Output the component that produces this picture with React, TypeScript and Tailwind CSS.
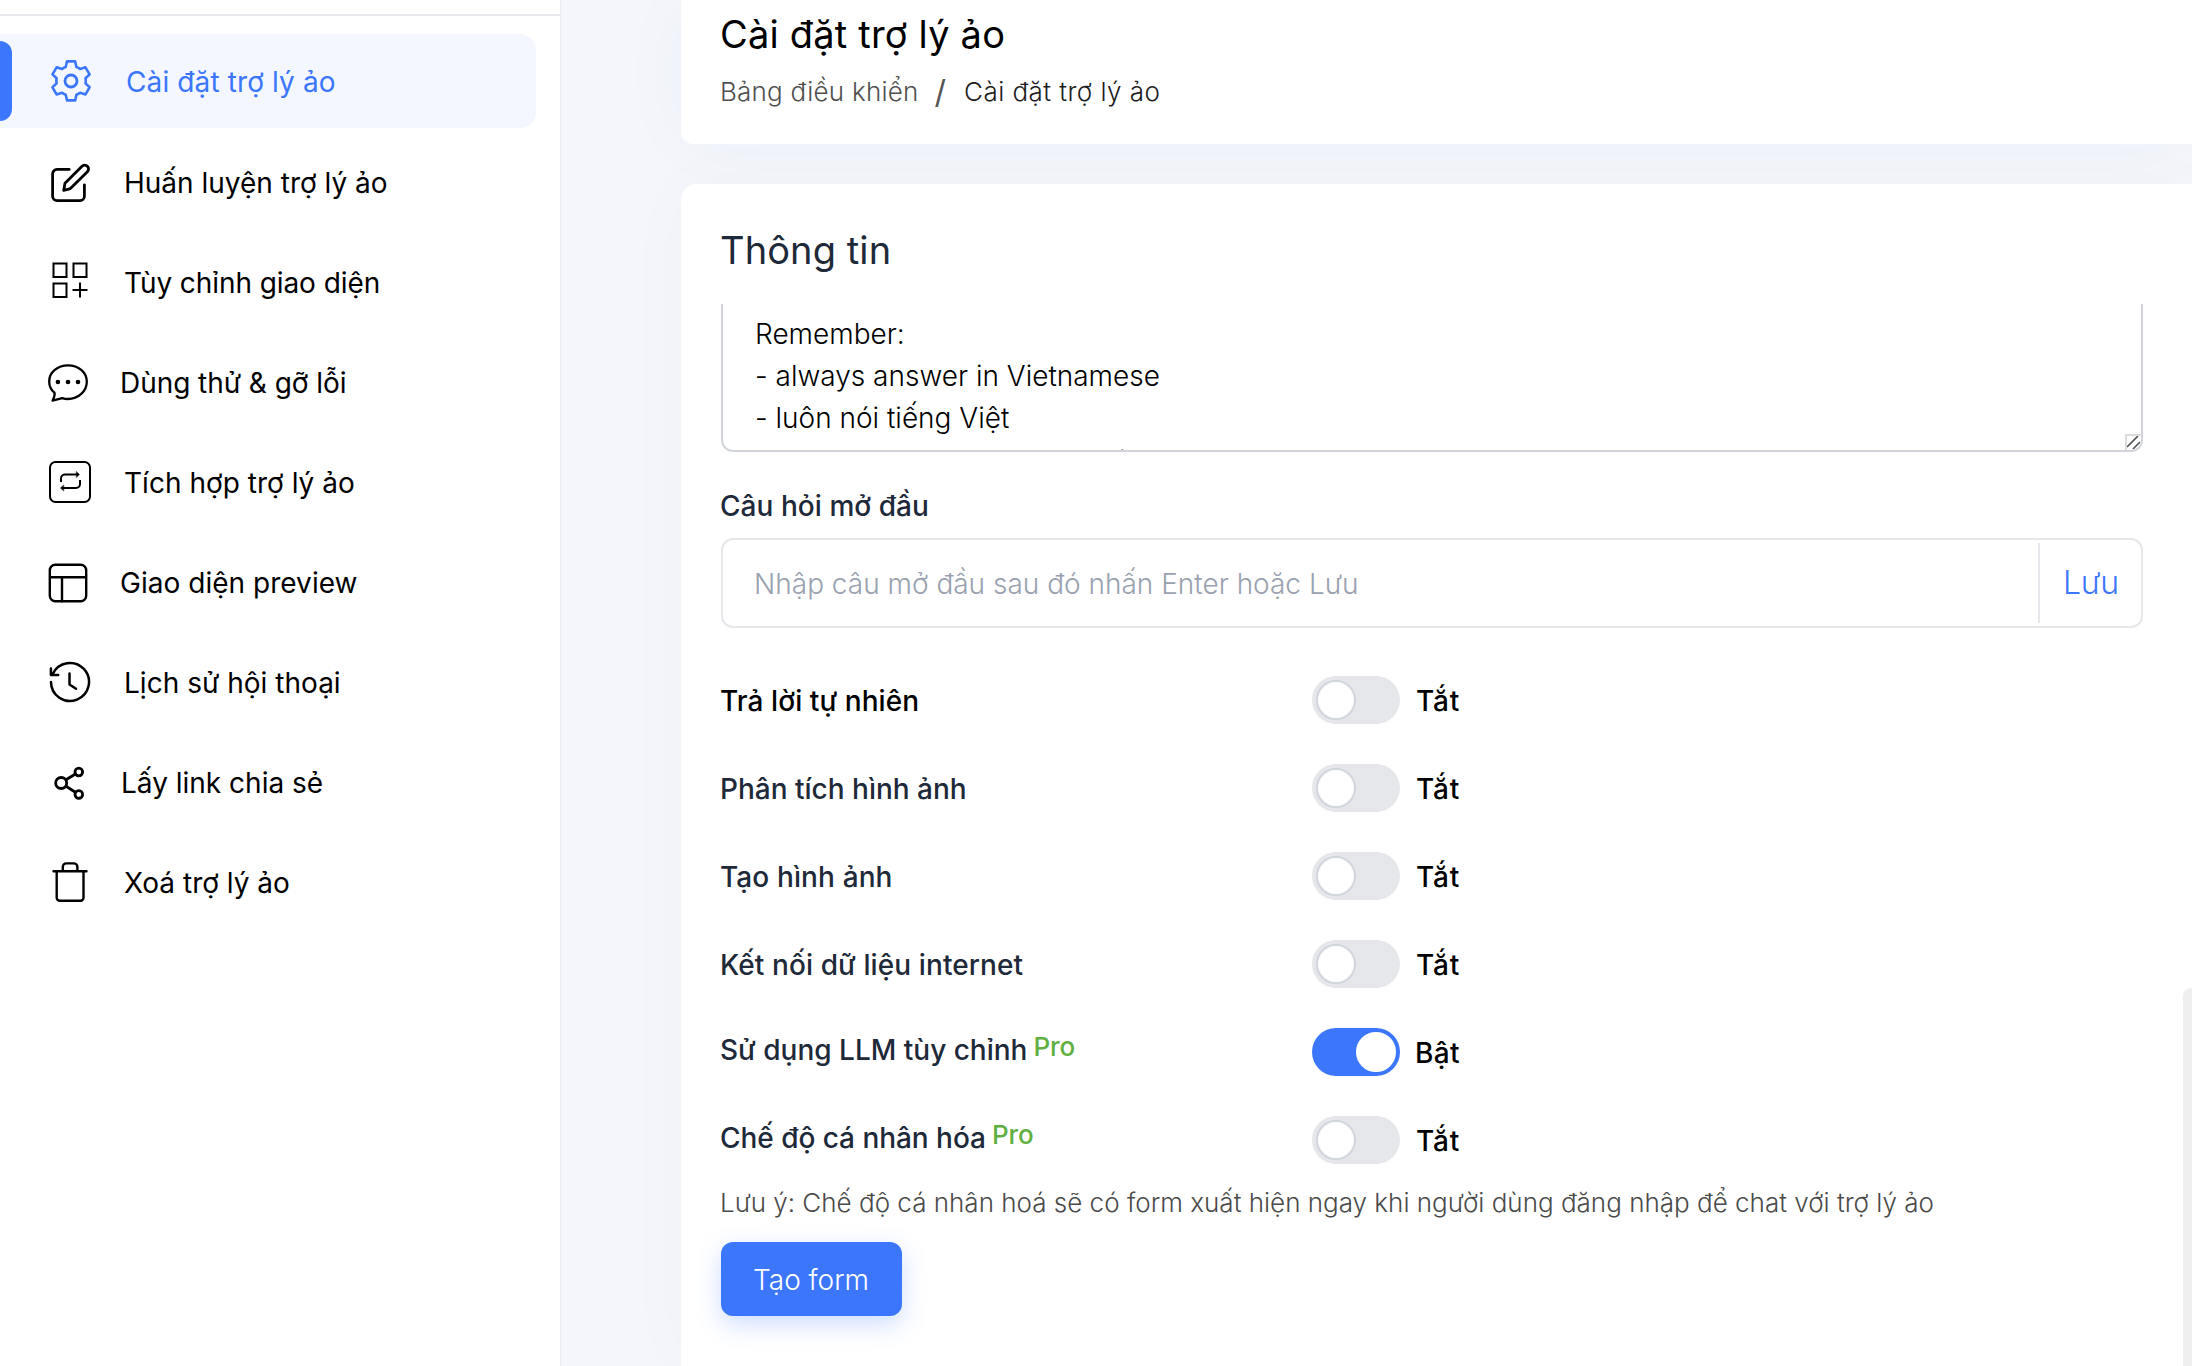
import type { ReactNode } from "react";

function Svg({ className, box, children }: { className: string; box: string; children: ReactNode }) {
  return (
    <svg className={className} viewBox={box} fill="none" stroke="currentColor" strokeLinecap="round" strokeLinejoin="round">
      {children}
    </svg>
  );
}

const gear = (
  <Svg className="ml-[51px] h-[42px] w-[40px]" box="0 0 40 42">
    <path
      strokeWidth="2.6"
      d="M16 1.4h8.2l1.2 5.6c1.4.5 2.6 1.1 3.7 2l5.4-1.7 4.1 7.1-4.1 3.9a13 13 0 0 1 0 5.1l4.1 3.9-4.1 7.1-5.4-1.7c-1.1.9-2.3 1.6-3.7 2.1l-1.2 5.6H16l-1.3-5.6a12 12 0 0 1-3.7-2.1l-5.4 1.7-4.1-7.1 4.1-3.9a13 13 0 0 1 0-5.1l-4.1-3.9 4.1-7.1L11 9c1.1-.9 2.3-1.5 3.7-2z"
    />
    <circle cx="20" cy="21" r="6" strokeWidth="2.8" />
  </Svg>
);

const edit = (
  <Svg className="ml-[51px] h-[40px] w-[40px]" box="0 0 40 40">
    <path strokeWidth="2.8" d="M18.2 6.4H6a4.4 4.4 0 0 0-4.4 4.4v22.4A4.4 4.4 0 0 0 6 37.6h23a4.4 4.4 0 0 0 4.4-4.4V21.8" />
    <path strokeWidth="2.8" d="M12.7 27.4l1.3-7.2L31 3.2a3.7 3.7 0 0 1 5.4 0 3.9 3.9 0 0 1 0 5.5L19.4 25.6z" />
  </Svg>
);

const grid = (
  <svg className="mb-[6px] ml-[52px] h-[36px] w-[36px]" viewBox="0 0 36 36" fill="none" stroke="currentColor" strokeWidth="2">
    <rect x="1.5" y="1.5" width="13" height="13.5" />
    <rect x="21.5" y="1.5" width="13" height="13.5" />
    <rect x="1.5" y="21.5" width="13" height="13.5" />
    <path d="M28 20.5v15M20.5 28h15" />
  </svg>
);

const chat = (
  <Svg className="ml-[48px] h-[38px] w-[40px]" box="0 0 40 38">
    <path strokeWidth="2.3" d="M20 1.3C9.7 1.3 1.2 8.3 1.2 17.4c0 4.6 1.7 8.4 5.3 11.3.7 2.6-.6 5-1.9 7.9l9.6-2.5c1.8.6 3.8.9 5.8.9 10.3 0 18.8-7.7 18.8-17.2S30.3 1.3 20 1.3z" />
    <g fill="currentColor" stroke="none">
      <circle cx="9.9" cy="18" r="2.3" />
      <circle cx="20" cy="18" r="2.3" />
      <circle cx="30" cy="18" r="2.3" />
    </g>
  </Svg>
);

const integrate = (
  <Svg className="mb-[2px] ml-[49px] h-[42px] w-[42px]" box="0 0 42 42">
    <rect x="1" y="1" width="40" height="40" rx="5.5" strokeWidth="2" />
    <path strokeWidth="2" strokeLinecap="butt" d="M12 21v-3.500a4 4 0 0 1 4-4h12M31 19v4a4 4 0 0 1-4 4H14" />
    <path fill="currentColor" strokeWidth=".5" d="M27.500 10.700l3 2.800-3 2.800zM14.500 24.200l-3 2.800 3 2.800z" />
  </Svg>
);

const layout = (
  <Svg className="ml-[48px] h-[40px] w-[40px]" box="0 0 40 40">
    <rect x="1.800" y="1.800" width="36.400" height="36.400" rx="5.500" strokeWidth="2.400" />
    <path strokeWidth="2.400" d="M2 14.200h36M14 14.200v24" />
  </Svg>
);

const history = (
  <Svg className="mb-[2px] ml-[49px] h-[42px] w-[42px]" box="0 0 42 42">
    <path strokeWidth="2.500" d="M2 21A19 19 0 1 0 3.800 12.900" />
    <path strokeWidth="2.500" d="M1.900 7.500v6.400h7.300" />
    <path strokeWidth="2.500" d="M20.500 12.500v11l6.500 4.200" />
  </Svg>
);

const share = (
  <Svg className="ml-[53px] h-[34px] w-[32px]" box="0 0 32 34">
    <g strokeWidth="2.800">
      <circle cx="8.200" cy="17" r="5.500" />
      <circle cx="25.800" cy="6" r="3.800" />
      <circle cx="25.800" cy="28.500" r="3.800" />
      <path d="M13 13.800l9.400-5.800M13 20.300l9.400 6" />
    </g>
  </Svg>
);

const trash = (
  <Svg className="mb-[2px] ml-[52px] h-[40px] w-[36px]" box="0 0 36 40">
    <path strokeWidth="2.400" d="M1.500 9.300h33M4.700 9.300v26.500a3 3 0 0 0 3 3h20.800a3 3 0 0 0 3-3V9.300M10.800 9V5a3.600 3.600 0 0 1 3.600-3.600h7.400A3.600 3.600 0 0 1 25.400 5v4" />
  </Svg>
);

type Item = { icon: ReactNode; label: string; pad: string; track: string };

const items: Item[] = [
  { icon: edit, label: "Huấn luyện trợ lý ảo", pad: "pl-[124px]", track: "tracking-[0px]" },
  { icon: grid, label: "Tùy chỉnh giao diện", pad: "pl-[124px]", track: "tracking-[-0.08px]" },
  { icon: chat, label: "Dùng thử & gỡ lỗi", pad: "pl-[120px]", track: "tracking-[-0.05px]" },
  { icon: integrate, label: "Tích hợp trợ lý ảo", pad: "pl-[124px]", track: "tracking-[0.02px]" },
  { icon: layout, label: "Giao diện preview", pad: "pl-[120px]", track: "tracking-[0.03px]" },
  { icon: history, label: "Lịch sử hội thoại", pad: "pl-[124px]", track: "tracking-[0.02px]" },
  { icon: share, label: "Lấy link chia sẻ", pad: "pl-[121px]", track: "tracking-[0px]" },
  { icon: trash, label: "Xoá trợ lý ảo", pad: "pl-[124px]", track: "tracking-[0px]" },
];

function Row({ icon, label, pad, track }: Item) {
  return (
    <a className="relative flex h-[100px] items-center">
      <span className={`whitespace-nowrap ${pad} ${track}`}>{label}</span>
      <span className="absolute left-0 top-0 flex h-full items-center">{icon}</span>
    </a>
  );
}

function Toggle({ on }: { on: boolean }) {
  return (
    <span className={`flex h-12 w-[88px] items-center rounded-full px-1 ${on ? "justify-end bg-[#3b76fd]" : "bg-gray-200"}`}>
      <span className={`h-10 w-10 rounded-full border-2 bg-white ${on ? "border-white" : "border-gray-300"}`} />
    </span>
  );
}

const settings = [
  { label: "Trả lời tự nhiên", color: "text-black", track: "tracking-[0.08px]", on: false, pro: false },
  { label: "Phân tích hình ảnh", color: "text-gray-800", track: "tracking-[0px]", on: false, pro: false },
  { label: "Tạo hình ảnh", color: "text-gray-800", track: "tracking-[0.12px]", on: false, pro: false },
  { label: "Kết nối dữ liệu internet", color: "text-gray-800", track: "tracking-[0.1px]", on: false, pro: false },
  { label: "Sử dụng LLM tùy chỉnh", color: "text-gray-800", track: "tracking-[0px]", on: true, pro: true },
  { label: "Chế độ cá nhân hóa", color: "text-gray-800", track: "tracking-[-0.04px]", on: false, pro: true },
];

export default function App() {
  return (
    <div className="relative flex h-[1366px] w-[2192px] overflow-hidden bg-[#f4f6fc] font-['Inter',sans-serif] text-[28px] leading-[42px] text-black">
      <aside className="h-full w-[561px] shrink-0 border-r border-[#eaebf0] bg-white">
        <div className="h-4 border-b-2 border-gray-200" />
        <div className="relative mr-6 mt-[18px] flex h-[94px] items-center rounded-r-2xl bg-[#f4f7ff] text-[#3b76fd]">
          <span className="absolute left-0 top-[7px] h-20 w-3 rounded-r-xl bg-[#3b76fd]" />
          <span className="absolute left-0 top-[26px]">{gear}</span>
          <span className="pl-[126px] pt-[2px] tracking-[0.12px]">Cài đặt trợ lý ảo</span>
        </div>
        <nav className="mt-[5px]">
          {items.map((it) => (
            <Row key={it.label} {...it} />
          ))}
        </nav>
      </aside>

      <main className="flex flex-1 flex-col pl-[120px]">
        <header className="h-36 shrink-0 rounded-bl-xl bg-white pl-[39px] shadow-[0_0_80px_rgba(30,40,90,0.03)]">
          <h1 className="pt-[10px] text-[38px] leading-[48px] tracking-[0.2px]">Cài đặt trợ lý ảo</h1>
          <div className="mt-[13px] flex items-center text-[26px] font-light">
            <span className="tracking-[0.22px] text-[#4f4f4f]">Bảng điều khiển</span>
            <span className="ml-[16px] text-[32px] font-normal text-[#555]">/</span>
            <span className="ml-[18px] tracking-[0.45px] text-[#1c1c1c]">Cài đặt trợ lý ảo</span>
          </div>
        </header>

        <section className="mt-10 flex-1 rounded-tl-2xl bg-white pl-10 shadow-[0_0_80px_rgba(30,40,90,0.025)]">
          <h2 className="-ml-px h-[120px] pt-[42px] text-[38px] leading-[48px] tracking-[0.1px] text-gray-800">Thông tin</h2>

          <div className="relative h-[148px] w-[1422px] overflow-hidden rounded-b-xl border-2 border-t-0 border-[#d1d5db]">
            <div className="whitespace-pre pl-8 pt-[9px] font-light">
              {"Remember:\n- always answer in Vietnamese\n- luôn nói tiếng Việt\n"}
              <span className="relative top-px">- always use a keen and polite manner</span>
            </div>
            <span className="absolute bottom-0 right-0 h-4 w-4 border-l-2 border-t-2 border-[#dcdcdc] bg-white text-[#555]">
              <svg className="h-full w-full" viewBox="0 0 14 14" fill="none" stroke="currentColor" strokeWidth="1.7">
                <path d="M0 11L11 0M6 13L13 6" />
              </svg>
            </span>
          </div>

          <p className="-ml-px mt-[33px] font-medium tracking-[0.05px] text-gray-800">Câu hỏi mở đầu</p>
          <div className="mt-[11px] flex h-[90px] w-[1422px] items-center rounded-xl border-2 border-gray-200 font-light">
            <span className="flex-1 pl-[31px] pt-[2px] text-gray-400">Nhập câu mở đầu sau đó nhấn Enter hoặc Lưu</span>
            <span className="flex h-20 w-[103px] items-center border-l-2 border-gray-200 pl-[23px] text-[32px] tracking-[-0.2px] text-[#3b76fd]">Lưu</span>
          </div>

          <div className="mt-7 font-medium">
            {settings.map((s) => (
              <div key={s.label} className="flex h-[88px] items-center">
                <div className={`-ml-px flex w-[592px] items-baseline ${s.pro ? "pb-1" : "pt-[2px]"} ${s.color} ${s.track}`}>
                  {s.label}
                  {s.pro && <sup className="relative -top-1 ml-[6px] text-[26px] leading-none tracking-[-0.1px] text-[#5fb041]">Pro</sup>}
                </div>
                <Toggle on={s.on} />
                <span className={`pt-[2px] ${s.on ? "ml-[15px] tracking-[0.4px]" : "ml-4 tracking-[0.8px]"}`}>{s.on ? "Bật" : "Tắt"}</span>
              </div>
            ))}
          </div>

          <p className="-ml-px mt-[-2px] whitespace-nowrap text-[26px] font-light text-[#4a4a4a]">
            Lưu ý: Chế độ cá nhân hoá sẽ có form xuất hiện ngay khi người dùng đăng nhập để chat với trợ lý ảo
          </p>
          <button className="mt-[18px] flex h-[74px] w-[181px] items-center justify-center rounded-xl bg-[#3b76fd] pr-px pt-[2px] font-light text-white shadow-[0_8px_24px_rgba(59,118,253,0.25)]">
            Tạo form
          </button>
        </section>
      </main>

      <div className="absolute bottom-0 right-0 h-[378px] w-[9px] rounded-tl-lg bg-[#efefef]" />
    </div>
  );
}
